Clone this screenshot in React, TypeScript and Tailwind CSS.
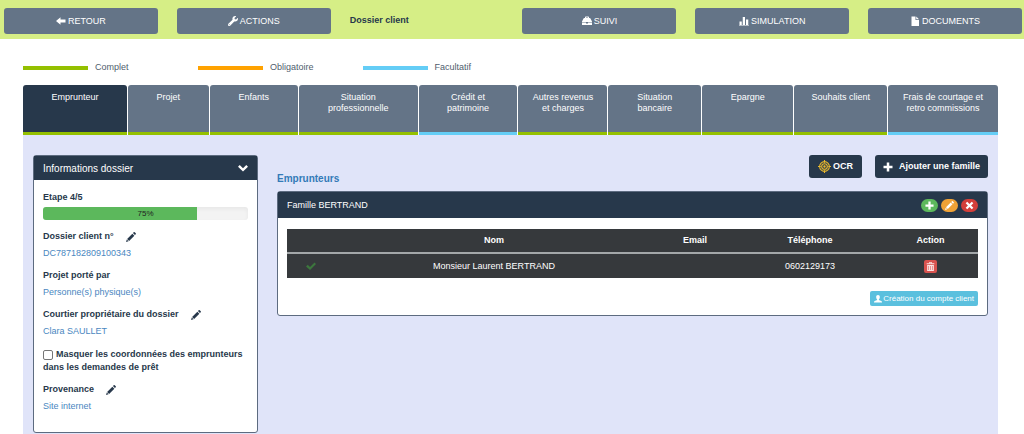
import type { ReactNode } from "react";
import { clsx } from "clsx";
import { FaWrench } from "react-icons/fa";

type Status = "complete" | "required" | "optional";

const LEGEND: { label: string; status: Status }[] = [
  { label: "Complet", status: "complete" },
  { label: "Obligatoire", status: "required" },
  { label: "Facultatif", status: "optional" },
];

const STATUS_BG: Record<Status, string> = {
  complete: "bg-[#94c000]",
  required: "bg-[#ffa200]",
  optional: "bg-[#64cdf6]",
};

const TABS: { label: string; status: Status; active?: boolean }[] = [
  { label: "Emprunteur", status: "complete", active: true },
  { label: "Projet", status: "complete" },
  { label: "Enfants", status: "complete" },
  { label: "Situation professionnelle", status: "complete" },
  { label: "Crédit et patrimoine", status: "optional" },
  { label: "Autres revenus et charges", status: "complete" },
  { label: "Situation bancaire", status: "complete" },
  { label: "Epargne", status: "complete" },
  { label: "Souhaits client", status: "complete" },
  { label: "Frais de courtage et retro commissions", status: "optional" },
];

function Glyph({ className, children }: { className?: string; children: ReactNode }) {
  return (
    <svg
      viewBox="0 0 20 20"
      fill="currentColor"
      aria-hidden="true"
      className={clsx("inline-block shrink-0", className)}
    >
      {children}
    </svg>
  );
}

const ArrowLeftIcon = () => (
  <Glyph className="size-[10px]">
    <path d="M0 10 9 2.500V7h10v6H9v4.500z" />
  </Glyph>
);

const BriefcaseIcon = () => (
  <Glyph className="size-[10px]">
    <path d="M6 4V2.500Q6 1 7.500 1h5Q14 1 14 2.500V4h1.500q1 0 1.500 1l3 6v2h-8v-1H8v1H0v-2l3-6q.5-1 1.500-1zM8 4h4V2.800H8zM0 14.200h8V15h4v-.8h8V18H0z" />
  </Glyph>
);

const StatsIcon = () => (
  <Glyph className="size-[10px]">
    <path d="M1 11h4.500v7H1zM7.500 2H12v16H7.500zM14 7h4.500v11H14zM0 18h20v1H0z" />
  </Glyph>
);

const FileIcon = () => (
  <Glyph className="size-[10px]">
    <path d="M3 1h8v7h7v12H3zM12.500 1 18 6.500h-5.500z" />
  </Glyph>
);

const ChevronIcon = () => (
  <Glyph className="size-[10px]">
    <path d="M0 7.500 3.500 4 10 10.500 16.500 4 20 7.500 10 17z" />
  </Glyph>
);

const PencilIcon = ({ className = "size-[10px]" }: { className?: string }) => (
  <Glyph className={className}>
    <path d="M15.500.5q1-.8 2 0l2 2q.8 1 0 2L17.800 6.200l-4-4zM12.700 3.300l4 4L6.200 17.800l-4-4zM1.600 14.900l3.500 3.500L0 20z" />
  </Glyph>
);

const PlusIcon = ({ className }: { className: string }) => (
  <Glyph className={className}>
    <path d="M7.500 1h5v6.500H19v5h-6.500V19h-5v-6.500H1v-5h6.500z" />
  </Glyph>
);

const CrossIcon = () => (
  <Glyph className="size-[9px]">
    <path d="M5 1.500 10 6.500l5-5L18.500 5l-5 5 5 5-3.500 3.500-5-5-5 5L1.500 15l5-5-5-5z" />
  </Glyph>
);

const CheckIcon = () => (
  <Glyph className="size-[10px] text-[#3c763d]">
    <path d="M0 11l3.500-3.500L8 12l9-9 3 3.200L8 18z" />
  </Glyph>
);

const TrashIcon = () => (
  <Glyph className="size-[9px] text-[#fbe3e2]">
    <path
      fillRule="evenodd"
      d="M7 0h6v2.500h5.500V5h-17V2.500H7zm1.500 1.500v1h3v-1zM2.500 6.500h15V20h-15zM5.500 9v8.500h1.200V9zm3.900 0v8.500h1.200V9zm3.900 0v8.500h1.200V9z"
    />
  </Glyph>
);

const UserIcon = () => (
  <Glyph className="size-2">
    <path d="M10 0c3 0 4.600 2.200 4.600 5 0 2.600-1 4.600-2.400 6v1.500l6 2.500q1.800.8 1.800 2.500V19H0v-1.500Q0 15.800 1.800 15l6-2.500V11C6.400 9.600 5.400 7.600 5.400 5c0-2.800 1.600-5 4.600-5z" />
  </Glyph>
);

const TargetIcon = () => (
  <svg
    viewBox="0 0 24 24"
    fill="none"
    stroke="#eab92d"
    strokeWidth="2"
    aria-hidden="true"
    className="size-[13px] shrink-0"
  >
    <circle cx="12" cy="12" r="9" />
    <circle cx="12" cy="12" r="5.200" />
    <circle cx="12" cy="12" r="1.200" fill="#eab92d" />
    <path d="M12 0v5M12 19v5M0 12h5M19 12h5" />
  </svg>
);

function ToolbarButton({ icon, children }: { icon: ReactNode; children: ReactNode }) {
  return (
    <button
      type="button"
      className="flex h-[26px] items-center justify-center gap-[2px] rounded-[3px] bg-[#647487] pt-px text-white"
    >
      {icon}
      {children}
    </button>
  );
}

function Field({ label, value, editable }: { label: string; value: string; editable?: boolean }) {
  return (
    <div className="space-y-1">
      <div className="flex items-center gap-3 font-bold">
        {label}
        {editable && (
          <button type="button" aria-label={`Modifier ${label}`} className="flex">
            <PencilIcon />
          </button>
        )}
      </div>
      <p className="text-[#4a87bf]">{value}</p>
    </div>
  );
}

function InfoCard() {
  return (
    <section className="w-[225px] shrink-0 rounded-[3px] border border-[#5d6b80] bg-white">
      <button
        type="button"
        className="flex h-6 w-full items-center justify-between bg-[#27384b] px-[9px] text-[10px] text-white"
      >
        Informations dossier
        <ChevronIcon />
      </button>
      <div className="space-y-[9px] px-[9px] pt-[11px] pb-[19px]">
        <div className="space-y-[3px]">
          <p className="font-bold">Etape 4/5</p>
          <div className="relative h-[13px] overflow-hidden rounded-[3px] bg-[#f3f3f3] shadow-inner">
            <div className="h-full bg-[#5cb85c]" style={{ width: "75%" }} />
            <span className="absolute inset-0 text-center text-[8px] text-[#222]">75%</span>
          </div>
        </div>
        <div className="space-y-[9px] pt-px">
          <Field label="Dossier client n°" value="DC787182809100343" editable />
          <Field label="Projet porté par" value="Personne(s) physique(s)" />
          <Field label="Courtier propriétaire du dossier" value="Clara SAULLET" editable />
        </div>
        <label className="block pt-px font-bold">
          <input
            type="checkbox"
            className="mr-[3px] size-[10px] appearance-none rounded-[2px] border border-[#767676] bg-white align-middle"
          />
          Masquer les coordonnées des emprunteurs dans les demandes de prêt
        </label>
        <Field label="Provenance" value="Site internet" editable />
      </div>
    </section>
  );
}

function FamilyCard() {
  return (
    <section className="rounded-[3px] border border-[#5d6b80] bg-white">
      <header className="flex h-[26px] items-center justify-between bg-[#27384b] px-[9px] text-white">
        <h3>Famille BERTRAND</h3>
        <div className="flex gap-[3px]">
          <button
            type="button"
            aria-label="Ajouter"
            className="flex h-[13px] w-[17px] items-center justify-center rounded-full bg-[#5cb85c]"
          >
            <PlusIcon className="size-[9px]" />
          </button>
          <button
            type="button"
            aria-label="Modifier"
            className="flex h-[13px] w-[17px] items-center justify-center rounded-full bg-[#f0a236]"
          >
            <PencilIcon className="size-[9px]" />
          </button>
          <button
            type="button"
            aria-label="Supprimer"
            className="flex h-[13px] w-[17px] items-center justify-center rounded-full bg-[#d43f3a]"
          >
            <CrossIcon />
          </button>
        </div>
      </header>
      <div className="px-[9px] pt-[11px] pb-[9px]">
        <table className="w-full table-fixed border-collapse bg-[#36393c] text-center text-white">
          <colgroup>
            <col className="w-[48px]" />
            <col className="w-[318px]" />
            <col className="w-[84px]" />
            <col className="w-[146px]" />
            <col className="w-[95px]" />
          </colgroup>
          <thead>
            <tr className="h-6 border-b-2 border-[#a3a7a9]">
              <th />
              <th>Nom</th>
              <th>Email</th>
              <th>Téléphone</th>
              <th>Action</th>
            </tr>
          </thead>
          <tbody>
            <tr className="h-[25px]">
              <td>
                <CheckIcon />
              </td>
              <td>Monsieur Laurent BERTRAND</td>
              <td />
              <td>0602129173</td>
              <td>
                <button
                  type="button"
                  aria-label="Supprimer l'emprunteur"
                  className="inline-flex size-[13px] items-center justify-center rounded-[2px] bg-[#d9534f] align-middle"
                >
                  <TrashIcon />
                </button>
              </td>
            </tr>
          </tbody>
        </table>
        <div className="mt-[13px] flex justify-end">
          <button
            type="button"
            className="flex h-[15px] items-center gap-px rounded-[2px] bg-[#5bc0de] px-1 text-[8px] text-white"
          >
            <UserIcon />
            Création du compte client
          </button>
        </div>
      </div>
    </section>
  );
}

export default function App() {
  return (
    <div className="flex min-h-screen flex-col bg-white font-['Liberation_Sans',Arial,sans-serif] text-[9px] leading-[13px] text-[#27384b]">
      <header className="grid h-[39px] grid-cols-6 items-center gap-[19px] bg-[#d6ee86] pt-[2px] pr-[2px] pl-1">
        <ToolbarButton icon={<ArrowLeftIcon />}>RETOUR</ToolbarButton>
        <ToolbarButton icon={<FaWrench className="size-[10px]" />}>ACTIONS</ToolbarButton>
        <h1 className="font-bold">Dossier client</h1>
        <ToolbarButton icon={<BriefcaseIcon />}>SUIVI</ToolbarButton>
        <ToolbarButton icon={<StatsIcon />}>SIMULATION</ToolbarButton>
        <ToolbarButton icon={<FileIcon />}>DOCUMENTS</ToolbarButton>
      </header>

      <main className="flex grow flex-col pr-[26px] pl-[23px]">
        <ul className="flex gap-[49px] pt-[22px] pb-[11px] text-[#4f5d6d]">
          {LEGEND.map(({ label, status }) => (
            <li key={label} className="flex items-center gap-[7px] first:w-[126px]">
              <span className={clsx("h-1 w-[65px]", STATUS_BG[status])} />
              {label}
            </li>
          ))}
        </ul>

        <nav className="grid grid-cols-[104fr_81fr_88fr_119fr_99fr_89fr_93fr_91fr_93fr_110fr] gap-px">
          {TABS.map(({ label, status, active }) => (
            <a
              key={label}
              href="#"
              className={clsx(
                "flex h-[50px] flex-col justify-between overflow-hidden rounded-t-[3px] text-center leading-[11px] text-white",
                active ? "bg-[#27384b]" : "bg-[#647487]",
              )}
            >
              <span className="px-3 pt-[7px] text-balance">{label}</span>
              <span className={clsx("h-[3px]", STATUS_BG[status])} />
            </a>
          ))}
        </nav>

        <div className="flex grow items-start gap-[19px] bg-[#e0e4f9] px-[10px] pt-5">
          <InfoCard />
          <div className="min-w-0 grow">
            <div className="flex h-9 items-start justify-between">
              <h2 className="pt-[17px] text-[10px] font-bold text-[#337ab7]">Emprunteurs</h2>
              <div className="flex gap-[13px] font-bold text-white">
                <button
                  type="button"
                  className="flex h-[23px] items-center gap-[2px] rounded-[3px] bg-[#27384b] px-[9px]"
                >
                  <TargetIcon />
                  OCR
                </button>
                <button
                  type="button"
                  className="flex h-[23px] items-center gap-[6px] rounded-[3px] bg-[#27384b] px-2"
                >
                  <PlusIcon className="size-[10px]" />
                  Ajouter une famille
                </button>
              </div>
            </div>
            <FamilyCard />
          </div>
        </div>
      </main>
    </div>
  );
}
